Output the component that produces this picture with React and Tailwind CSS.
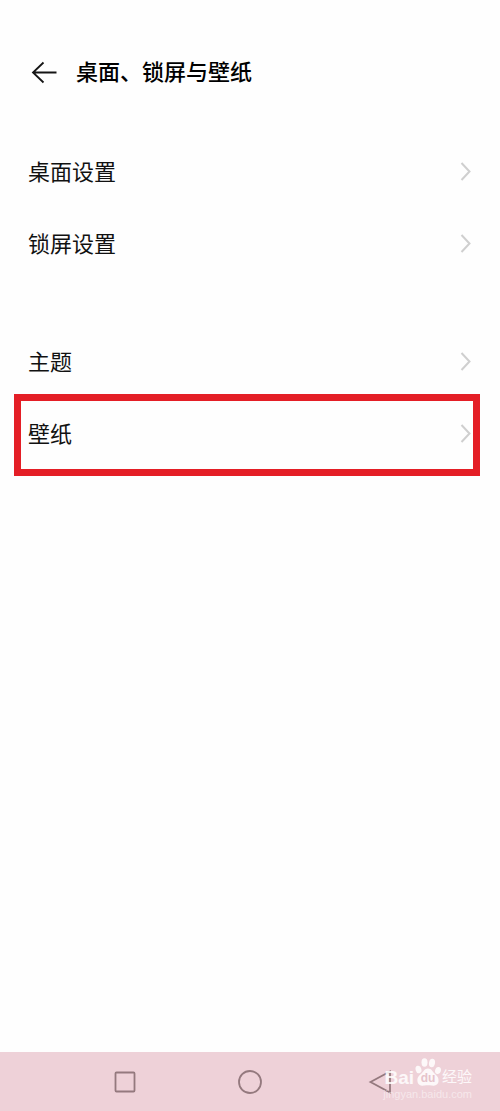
import React from "react";

const groups = [
  [{ label: "桌面设置" }, { label: "锁屏设置" }],
  [{ label: "主题" }, { label: "壁纸", highlighted: true }],
];

function Chevron() {
  return (
    <svg className="h-5 w-3" viewBox="0 0 12 20" fill="none" stroke="#cfcfcf" strokeWidth="2" aria-hidden="true">
      <path d="M1.500 1 9.500 9.500 1.500 18" />
    </svg>
  );
}

function Row({ label, highlighted }) {
  return (
    <li className="relative">
      <button type="button" className="flex h-18 w-full items-center justify-between pr-7 pl-7 text-left text-[22px] leading-8 text-[#111]">
        <span className="pb-1">{label}</span>
        <Chevron />
      </button>
      {highlighted && (
        <span className="pointer-events-none absolute -top-1 right-5 -bottom-1.5 left-3.5 border-7 border-[#e41e26]" />
      )}
    </li>
  );
}

function Watermark() {
  return (
    <div className="pointer-events-none absolute top-1 right-7 flex flex-col items-end text-white/85">
      <div className="flex items-end">
        <span className="font-['Liberation_Sans',sans-serif] text-[19px] leading-5 font-bold">Bai</span>
        <svg className="h-8 w-7" viewBox="0 0 28 32" aria-hidden="true">
          <g fill="#fff" fillOpacity=".85">
            <ellipse cx="4.500" cy="13.500" rx="2.900" ry="3.800" transform="rotate(-15 4.500 13.500)" />
            <ellipse cx="10.500" cy="6.500" rx="3" ry="4.200" />
            <ellipse cx="18" cy="7" rx="3" ry="4.200" transform="rotate(10 18 7)" />
            <ellipse cx="24" cy="14.500" rx="2.900" ry="3.600" transform="rotate(15 24 14.500)" />
            <path d="M14 12.500c-3.500 0-4.500 3.200-6.800 5.300C4.800 20 3 21.500 3.500 25.500c.6 4 4 4.500 7 4.100 2.300-.4 4.700-.4 7 0 2.500.4 6.400-.1 7-4.100.5-3.500-1.300-5.500-3.700-7.700C18.500 15.700 17.500 12.500 14 12.500Z" />
          </g>
          <text x="14" y="26" textAnchor="middle" fontSize="12" fontWeight="700" fontFamily="Liberation Sans, sans-serif" fill="#e6c3cb">du</text>
        </svg>
        <span className="text-[15px] leading-6">经验</span>
      </div>
      <span className="font-['Liberation_Sans',sans-serif] text-[11px] leading-3 text-white/50">jingyan.baidu.com</span>
    </div>
  );
}

export default function App() {
  return (
    <div className="flex min-h-screen flex-col bg-[#fefefe] font-['Noto_Sans_CJK_SC',sans-serif]">
      <header className="flex items-center gap-4 px-7 pt-14">
        <button type="button" aria-label="返回" className="flex h-8 w-8 items-center justify-center">
          <svg className="h-6 w-7" viewBox="0 0 28 24" fill="none" stroke="#151515" strokeWidth="1.8" aria-hidden="true">
            <path d="M26.500 12.500H3M13.500 2.500 3 12.500l10.500 10" />
          </svg>
        </button>
        <h1 className="-mt-1 text-[22px] leading-8 font-medium text-black">桌面、锁屏与壁纸</h1>
      </header>

      <main className="flex grow flex-col gap-[46px] pt-12">
        {groups.map((rows) => (
          <ul key={rows[0].label}>
            {rows.map((row) => (
              <Row key={row.label} {...row} />
            ))}
          </ul>
        ))}
      </main>

      <nav className="relative grid h-[59px] grid-cols-3 place-items-center bg-[#eed1d8] px-[62px]">
        <button type="button" aria-label="最近任务">
          <svg className="h-6 w-6" viewBox="0 0 24 24" fill="none" stroke="#94797e" strokeWidth="1.8" aria-hidden="true">
            <rect x="2.500" y="2.500" width="19" height="19" rx="1" />
          </svg>
        </button>
        <button type="button" aria-label="主屏幕">
          <svg className="h-6 w-6" viewBox="0 0 24 24" fill="none" stroke="#94797e" strokeWidth="1.8" aria-hidden="true">
            <circle cx="12" cy="12" r="11" />
          </svg>
        </button>
        <button type="button" aria-label="后退">
          <svg className="h-6 w-10" viewBox="0 0 40 24" fill="none" stroke="#94797e" strokeWidth="1.8" aria-hidden="true">
            <path d="M15.500 12 35 1.500v21Z" />
          </svg>
        </button>
        <Watermark />
      </nav>
    </div>
  );
}
